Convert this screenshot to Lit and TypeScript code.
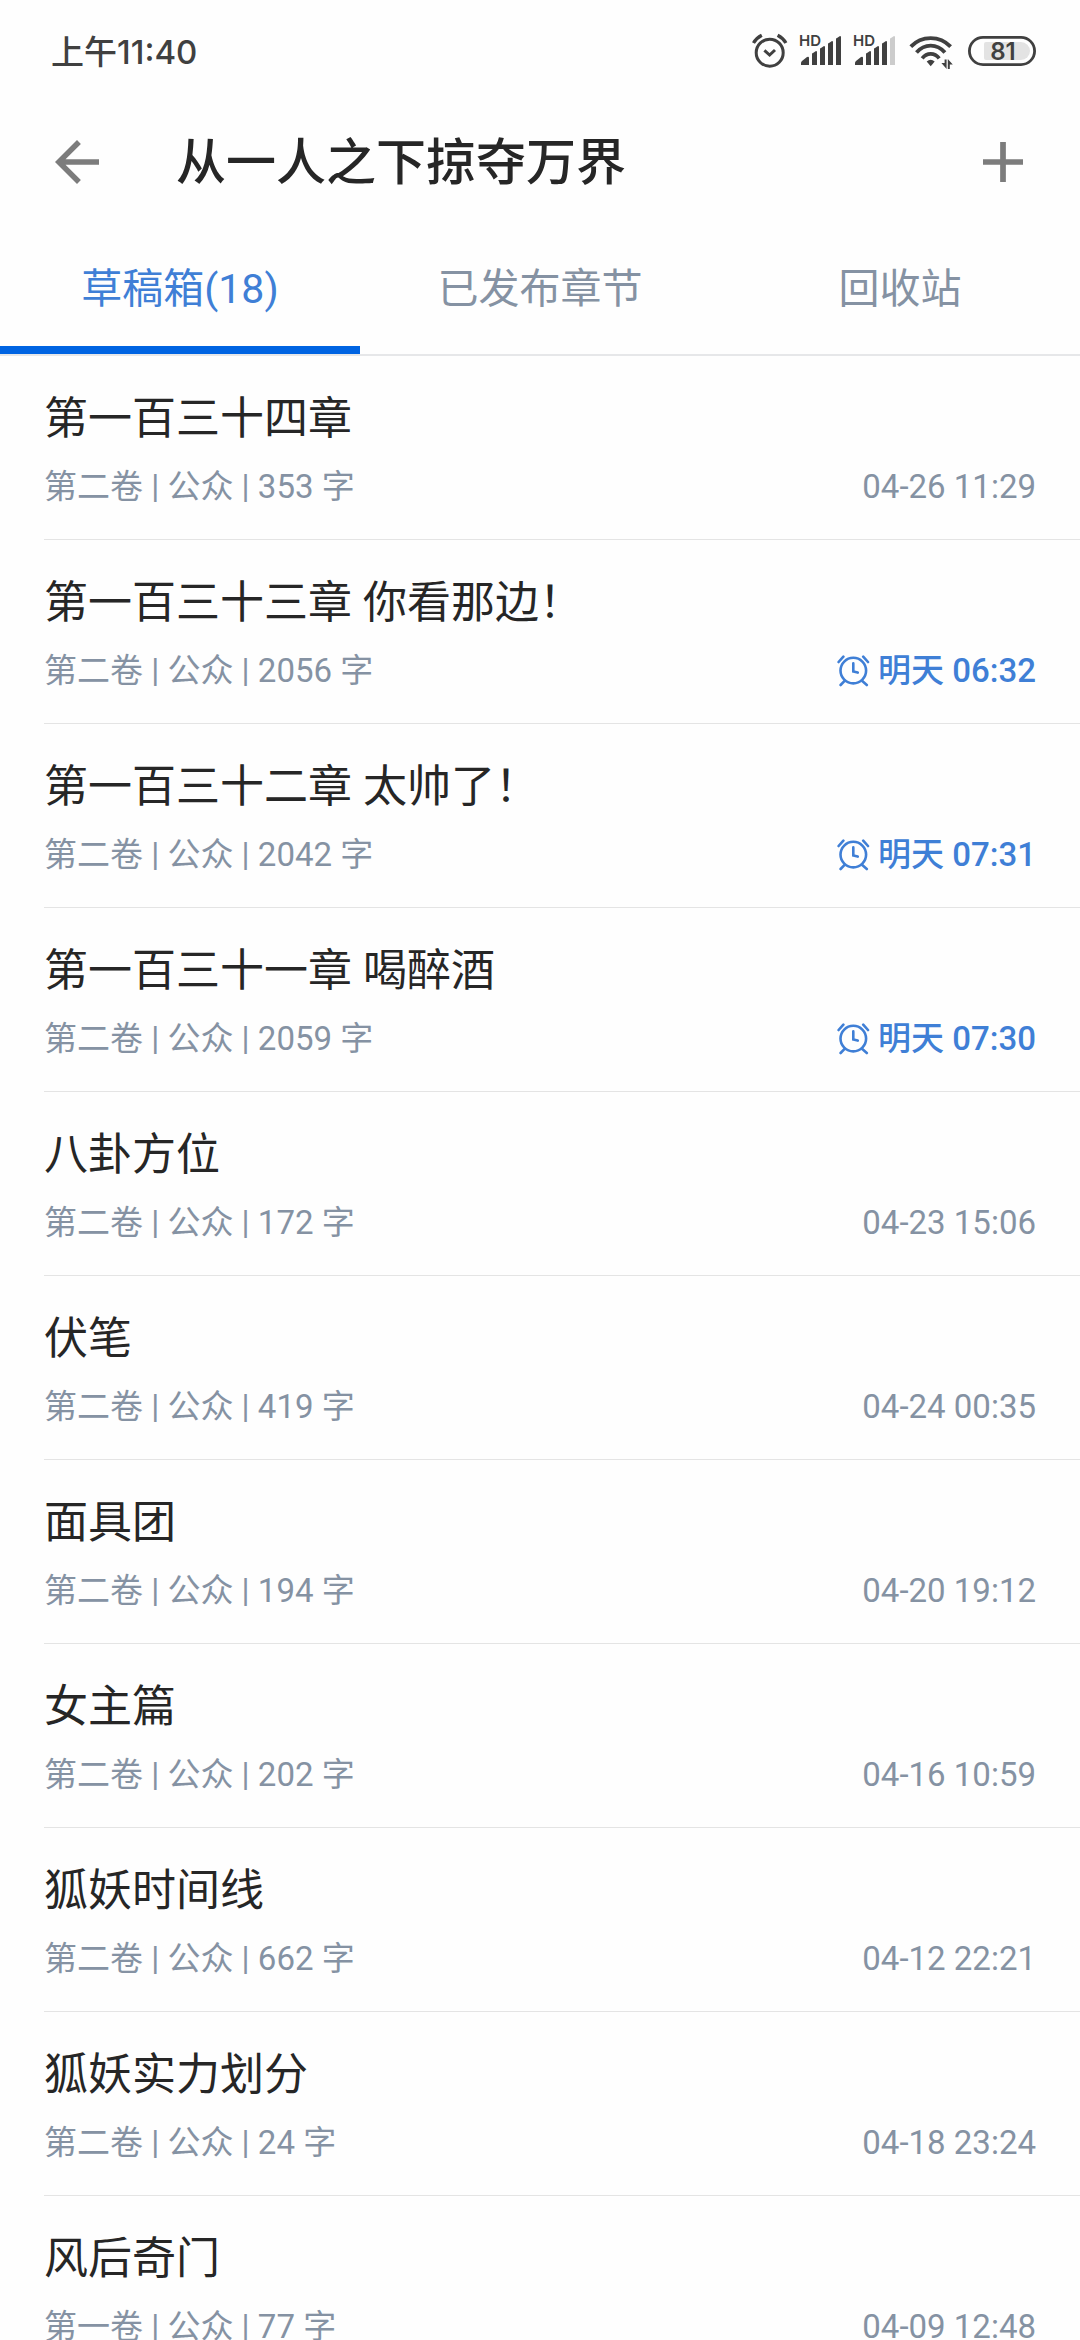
import { LitElement, html, css, svg, nothing } from "lit";
import { customElement, property, state } from "lit/decorators.js";
import { classMap } from "lit/directives/class-map.js";

interface Chapter {
  title: string;
  volume: string;
  words: number;
  time: string;
  scheduled?: boolean;
}

const CHAPTERS: Chapter[] = [
  { title: "第一百三十四章", volume: "第二卷", words: 353, time: "04-26 11:29" },
  { title: "第一百三十三章 你看那边！", volume: "第二卷", words: 2056, time: "明天 06:32", scheduled: true },
  { title: "第一百三十二章 太帅了！", volume: "第二卷", words: 2042, time: "明天 07:31", scheduled: true },
  { title: "第一百三十一章 喝醉酒", volume: "第二卷", words: 2059, time: "明天 07:30", scheduled: true },
  { title: "八卦方位", volume: "第二卷", words: 172, time: "04-23 15:06" },
  { title: "伏笔", volume: "第二卷", words: 419, time: "04-24 00:35" },
  { title: "面具团", volume: "第二卷", words: 194, time: "04-20 19:12" },
  { title: "女主篇", volume: "第二卷", words: 202, time: "04-16 10:59" },
  { title: "狐妖时间线", volume: "第二卷", words: 662, time: "04-12 22:21" },
  { title: "狐妖实力划分", volume: "第二卷", words: 24, time: "04-18 23:24" },
  { title: "风后奇门", volume: "第一卷", words: 77, time: "04-09 12:48" },
];

const TABS = ["草稿箱(18)", "已发布章节", "回收站"];

@customElement("status-bar")
export class StatusBar extends LitElement {
  static styles = css`
    :host {
      display: flex;
      align-items: center;
      justify-content: space-between;
      height: 102px;
      padding: 0 44px 0 51px;
      color: #404040;
      font-family: Inter, "Noto Sans CJK SC", sans-serif;
    }
    .clock {
      padding-top: 2px;
      font-size: 33px;
      font-weight: 500;
      line-height: 40px;
    }
    .icons {
      display: flex;
      align-items: center;
      gap: 12px;
    }
    .icons svg {
      display: block;
      height: 36px;
      overflow: visible;
    }
    .hd {
      font-size: 15px;
      font-weight: 600;
    }
    .level {
      font-size: 24px;
      font-weight: 600;
    }
  `;

  private signal(full: boolean) {
    return html`<svg width="42" height="36" viewBox="0 0 42 36" fill="#404040" aria-hidden="true">
      <text class="hd" x="-1" y="13">HD</text>
      <path d="M1 32v-2q0-1 1-2l5-4q2-1 2 1v7zM12 32V21q0-1 1-1l3-2q1 0 1 1v13zM20 32V16q0-1 1-1l3-2q1 0 1 1v18zM28 32V11q0-1 1-1l3-2q1 0 1 1v23z" />
      <path d="M36 32V6q0-1 1-1l3-2q1 0 1 1v28z" fill=${full ? "#404040" : "#cccccc"} />
    </svg>`;
  }

  render() {
    return html`
      <span class="clock">上午11:40</span>
      <div class="icons">
        <svg width="36" height="36" viewBox="0 0 36 36" fill="none" stroke="#404040" stroke-width="3" aria-hidden="true">
          <circle cx="17.7" cy="19.7" r="13.5" />
          <path d="M1.5 10Q4.5 5 9.8 2.3M33.9 10Q30.9 5 25.6 2.3" stroke-width="3.4" />
          <path d="M12.4 17.4l5.2 4.6 5.4-5" />
        </svg>
        ${this.signal(true)} ${this.signal(false)}
        <svg width="48" height="36" viewBox="-2 0 48 36" fill="none" stroke="#404040" stroke-width="3.8" aria-hidden="true">
          <path d="M.8 13.6C11.5 2.2 29.8 2.2 40.6 13.6M6.5 19.6C14.4 10.4 27 10.4 34.9 19.6M12.2 25.3C16.8 19.4 24.6 19.4 29.2 25.3" />
          <path d="M16.7 28.5Q20.7 25 24.7 28.5L20.7 33.2z" fill="#404040" stroke="none" />
          <path d="M31.4 30h3.2v-3.5h2V36zM37.8 26l5 5.6h-3V36h-2z" fill="#404040" stroke="none" />
        </svg>
        <svg width="68" height="36" viewBox="0 0 68 36" role="img" aria-label="81%">
          <rect x="1.4" y="4.4" width="65.2" height="27.2" rx="13.6" fill="none" stroke="#404040" stroke-width="2.8" />
          <path d="M18 9h35a9 9 0 0 1 0 18H18q-2 0-2-2V11q0-2 2-2z" fill="#e3e3e3" />
          <text class="level" x="35" y="27" text-anchor="middle" fill="#404040">81</text>
        </svg>
      </div>
    `;
  }
}

@customElement("chapter-row")
export class ChapterRow extends LitElement {
  @property({ attribute: false }) chapter!: Chapter;

  static styles = css`
    :host {
      display: block;
    }
    .row {
      display: flex;
      flex-direction: column;
      gap: 20px;
      padding: 35px 44px 32px 0;
      border-bottom: 1px solid #e4e4e4;
      color: #262626;
      text-decoration: none;
    }
    .title {
      font-size: 44px;
      line-height: 56px;
      font-weight: 400;
      margin: 0;
    }
    .info {
      display: flex;
      justify-content: space-between;
      align-items: center;
      font-size: 33px;
      line-height: 40px;
      color: #8592a3;
    }
    .time {
      display: flex;
      align-items: center;
      gap: 8px;
    }
    .time svg {
      width: 33px;
      height: 33px;
    }
    .scheduled {
      color: #3f7fd6;
      font-weight: 500;
    }
  `;

  render() {
    const c = this.chapter;
    const alarm = html`<svg viewBox="0 0 33 33" fill="none" stroke="currentColor" stroke-width="2.6" stroke-linecap="round" aria-hidden="true">
      ${svg`<circle cx="16.3" cy="15.6" r="12.8" />
      <path d="M1.6 7L6.4 1.6M26.2 1.6L31 7M7.6 25.8l-4 4.2M25 25.8l4.8 4.2M16.3 8.4v8l4.4 1.2" />`}
    </svg>`;
    return html`
      <a class="row" href="#">
        <h2 class="title">${c.title}</h2>
        <div class="info">
          <span>${c.volume} | 公众 | ${c.words} 字</span>
          <span class=${classMap({ time: true, scheduled: !!c.scheduled })}>
            ${c.scheduled ? alarm : nothing}<span>${c.time}</span>
          </span>
        </div>
      </a>
    `;
  }
}

@customElement("app-root")
export class AppRoot extends LitElement {
  @state() private active = 0;

  static styles = css`
    :host {
      display: flex;
      flex-direction: column;
      height: 100vh;
      overflow: hidden;
      background: #fefefe;
      font-family: Roboto, "Noto Sans CJK SC", sans-serif;
    }
    button {
      border: 0;
      margin: 0;
      padding: 0;
      background: none;
      font: inherit;
      color: inherit;
      cursor: pointer;
    }
    .header {
      display: flex;
      align-items: center;
      height: 120px;
      padding: 0 57px 0 55px;
      color: #7c7c7c;
    }
    .header svg {
      display: block;
      fill: currentColor;
    }
    .heading {
      flex: 1;
      margin: 0 0 0 77px;
      padding-top: 2px;
      font-size: 50px;
      line-height: 60px;
      font-weight: 500;
      color: #262626;
    }
    .tabs {
      display: flex;
      height: 132px;
      border-bottom: 2px solid #e6e7e9;
    }
    .tabs .tab {
      flex: 1;
      padding-top: 10px;
      border-bottom: 8px solid transparent;
      font-size: 41px;
      line-height: 50px;
      color: #8592a3;
    }
    .tabs .active {
      color: #3f7fd6;
      border-bottom-color: #0064e2;
    }
    .list {
      flex: 1;
      min-height: 0;
      margin: 0;
      padding: 0 0 0 44px;
      list-style: none;
      overflow-y: auto;
      scrollbar-width: none;
    }
  `;

  render() {
    return html`
      <status-bar></status-bar>
      <header class="header">
        <button aria-label="返回">
          <svg width="44" height="44" viewBox="4 4 16 16">
            <path d="M20 11H7.83l5.59-5.59L12 4l-8 8 8 8 1.41-1.41L7.83 13H20z" />
          </svg>
        </button>
        <h1 class="heading">从一人之下掠夺万界</h1>
        <button aria-label="新建章节">
          <svg width="40" height="40" viewBox="5 5 14 14">
            <path d="M19 13h-6v6h-2v-6H5v-2h6V5h2v6h6z" />
          </svg>
        </button>
      </header>
      <nav class="tabs" role="tablist">
        ${TABS.map(
          (label, i) => html`<button
            role="tab"
            aria-selected=${i === this.active ? "true" : "false"}
            class=${classMap({ tab: true, active: i === this.active })}
            @click=${() => (this.active = i)}
          >${label}</button>`
        )}
      </nav>
      <ul class="list">
        ${CHAPTERS.map((c) => html`<li><chapter-row .chapter=${c}></chapter-row></li>`)}
      </ul>
    `;
  }
}
